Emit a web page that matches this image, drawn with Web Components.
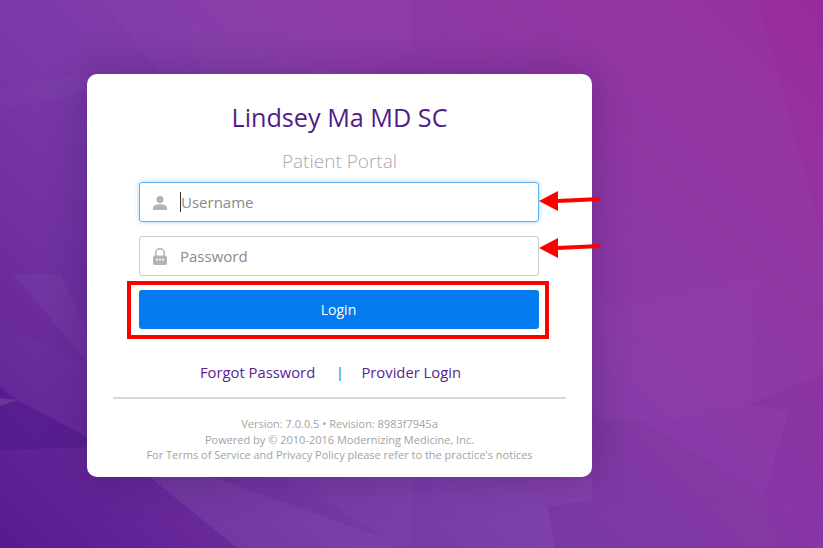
<!DOCTYPE html>
<html>
<head>
<meta charset="utf-8">
<title>Patient Portal</title>
<style>
  html, body { margin: 0; height: 100%; }
  body { font-family: "Open Sans", "Noto Sans", sans-serif; overflow: hidden; }
</style>
</head>
<body>
<login-page>
  <login-card>
    <login-field slot="fields" icon="user" focused>Username</login-field>
    <login-field slot="fields" icon="lock">Password</login-field>
    <login-button slot="action">Login</login-button>
  </login-card>
</login-page>

<script>
class LoginPage extends HTMLElement {
  constructor () {
    super()
    this.shadow = this.attachShadow({ mode: 'open' })
  }

  connectedCallback () {
    this.shadow.innerHTML = /*html*/`
    <style>
      :host {
        display: block;
        position: relative;
        width: 823px;
        height: 548px;
        overflow: hidden;
        background: linear-gradient(45deg, #591a8f 0%, #7030a0 25%, #7a3aa8 40%, #8a3aa8 60%, #9635a2 89%, #962c9d 100%);
      }
      .bg { position: absolute; left: 0; top: 0; }
      .wrap { position: relative; padding: 74px 0 0 87px; }
    </style>
    <svg class="bg" width="823" height="548" viewBox="0 0 823 548">
      <!-- top left -->
      <polygon points="102,0 411,0 411,50 370,74 160,74" fill="#fff" opacity=".02"/>
      <polygon points="190,27 300,60 340,74 200,74" fill="#fff" opacity=".012"/>
      <polygon points="0,87 87,74 87,92 0,110" fill="#fff" opacity=".02"/>
      <!-- left side -->
      <polygon points="13,274 60,274 87,330 87,362" fill="#fff" opacity=".035"/>
      <polygon points="0,324 87,362 87,437 17,400 0,387" fill="#fff" opacity=".015"/>
      <polygon points="0,387 17,400 87,437 87,447 0,450" fill="#3f0f80" opacity=".3"/>
      <polygon points="0,398 17,400 0,406" fill="#fff" opacity=".1"/>
      <!-- bottom -->
      <polygon points="150,477 213,477 387,539 393,548 237,548" fill="#fff" opacity=".07"/>
      <polygon points="213,477 287,477 387,539" fill="#fff" opacity=".03"/>
      <polygon points="287,477 411,477 411,548 393,548 387,539" fill="#fff" opacity=".05"/>
      <polygon points="411,477 592,477 592,500 548,506 555,548 411,548" fill="#fff" opacity=".035"/>
      <polygon points="548,506 764,494 781,548 555,548" fill="#000" opacity=".02"/>
      <!-- right side -->
      <polygon points="592,300 618,307 760,274 751,404 651,426 644,421 593,417" fill="#fff" opacity=".012"/>
      <polygon points="593,417 644,421 651,426 764,494 592,505" fill="#000" opacity=".018"/>
      <polygon points="758,0 823,0 823,240" fill="#9c289c" opacity=".3"/>
      <polygon points="751,404 823,374 823,548 781,548 764,494 789,411" fill="#82239a" opacity=".2"/>
    </svg>
    <div class="wrap"><slot></slot></div>
    `
  }
}

class LoginCard extends HTMLElement {
  constructor () {
    super()
    this.shadow = this.attachShadow({ mode: 'open' })
  }

  connectedCallback () {
    this.shadow.innerHTML = /*html*/`
    <style>
      :host {
        display: block;
        box-sizing: border-box;
        position: relative;
        width: 505px;
        height: 403px;
        background: #fff;
        border-radius: 10px;
        box-shadow: 0 0 40px rgba(40, 10, 70, .32);
        text-align: center;
      }
      h1 {
        margin: 0;
        padding-top: 25px;
        font-size: 25.2px;
        line-height: 36px;
        font-weight: 400;
        color: #521c86;
      }
      h2 {
        margin: 0;
        padding-top: 14px;
        font-size: 19px;
        line-height: 25px;
        font-weight: 300;
        color: #a8a8a8;
      }
      .fields {
        display: flex;
        flex-direction: column;
        gap: 14px;
        padding: 8px 53px 0 52px;
      }
      .action { padding: 14px 53px 0 52px; }
      .links {
        display: flex;
        justify-content: center;
        align-items: center;
        gap: 19px;
        margin-top: 32px;
        padding-right: 18px;
        height: 22px;
        font-size: 14.8px;
        color: #5c2390;
      }
      .links i { font-style: normal; font-weight: 600; color: #3d9bf0; margin: 0 -1.5px 0 1.5px; }
      hr {
        border: 0;
        height: 2px;
        background: #d8d8d8;
        margin: 14px 26px 0;
      }
      footer {
        padding-top: 17px;
        font-size: 11px;
        line-height: 15.5px;
        color: #a3a3a3;
      }
      footer div { white-space: nowrap; }
    </style>
    <h1>Lindsey Ma MD SC</h1>
    <h2>Patient Portal</h2>
    <div class="fields"><slot name="fields"></slot></div>
    <div class="action"><slot name="action"></slot></div>
    <div class="links"><span>Forgot Password</span><i>|</i><span>Provider Login</span></div>
    <hr>
    <footer>
      <div>Version: 7.0.0.5 • Revision: 8983f7945a</div>
      <div>Powered by © 2010-2016 Modernizing Medicine, Inc.</div>
      <div>For Terms of Service and Privacy Policy please refer to the practice's notices</div>
    </footer>
    `
  }
}

const icons = {
  user: '<svg width="14" height="15" viewBox="0 0 14 15"><circle cx="7" cy="4.500" r="3.500" fill="#b5b2b2"/><path d="M0 15v-2c0-2.600 3.400-3.800 7-3.800s7 1.200 7 3.800v2z" fill="#b5b2b2"/></svg>',
  lock: '<svg width="14" height="17" viewBox="0 0 14 17"><path d="M2.800 8V5a4.200 4.200 0 0 1 8.400 0V8" fill="none" stroke="#b5b2b2" stroke-width="1.500"/><rect x="0" y="7.500" width="14" height="9.500" rx="2" fill="#b5b2b2"/><circle cx="4" cy="11.800" r="1" fill="#fff"/><circle cx="7" cy="11.800" r="1" fill="#fff"/><circle cx="10" cy="11.800" r="1" fill="#fff"/></svg>'
}

class LoginField extends HTMLElement {
  constructor () {
    super()
    this.shadow = this.attachShadow({ mode: 'open' })
  }

  connectedCallback () {
    const focused = this.hasAttribute('focused')
    this.shadow.innerHTML = /*html*/`
    <style>
      :host {
        display: flex;
        position: relative;
        box-sizing: border-box;
        align-items: center;
        height: 40px;
        padding-left: 13px;
        background: #fff;
        border: 1px solid #ccc;
        border-radius: 3px;
        font-size: 15px;
        color: #8a8a8a;
        text-align: left;
      }
      :host([focused]) {
        border-color: #5eb0f2;
        box-shadow: 0 0 5px rgba(94, 176, 242, .55);
      }
      .icon { display: flex; width: 14px; }
      .caret { width: 1px; height: 20px; background: #333; margin-left: 13px; }
      .text { margin-left: ${focused ? '0' : '13px'}; }
      .arrow { position: absolute; left: 399px; top: ${focused ? 8 : 1}px; }
    </style>
    <span class="icon">${icons[this.getAttribute('icon')]}</span>
    ${focused ? '<span class="caret"></span>' : ''}
    <span class="text"><slot></slot></span>
    <svg class="arrow" width="62" height="20" viewBox="0 0 62 20">
      <polygon points="0,10 19,0 19,20" fill="#f00"/>
      <polygon points="18,8 61,6 61,10 18,12" fill="#f00"/>
    </svg>
    `
  }
}

class LoginButton extends HTMLElement {
  constructor () {
    super()
    this.shadow = this.attachShadow({ mode: 'open' })
  }

  connectedCallback () {
    this.shadow.innerHTML = /*html*/`
    <style>
      :host { display: block; position: relative; }
      button {
        display: block;
        width: 100%;
        height: 39px;
        padding: 0 1px 0 0;
        border: 0;
        border-radius: 3px;
        background: #047bee;
        color: #fff;
        font: 400 14px "Open Sans", "Noto Sans", sans-serif;
      }
      .mark {
        position: absolute;
        left: -12px;
        top: -9px;
        width: 422px;
        height: 58px;
        box-sizing: border-box;
        border: 4px solid #f00;
        pointer-events: none;
      }
    </style>
    <button><slot></slot></button>
    <div class="mark"></div>
    `
  }
}

customElements.define('login-page', LoginPage)
customElements.define('login-card', LoginCard)
customElements.define('login-field', LoginField)
customElements.define('login-button', LoginButton)
</script>
</body>
</html>
